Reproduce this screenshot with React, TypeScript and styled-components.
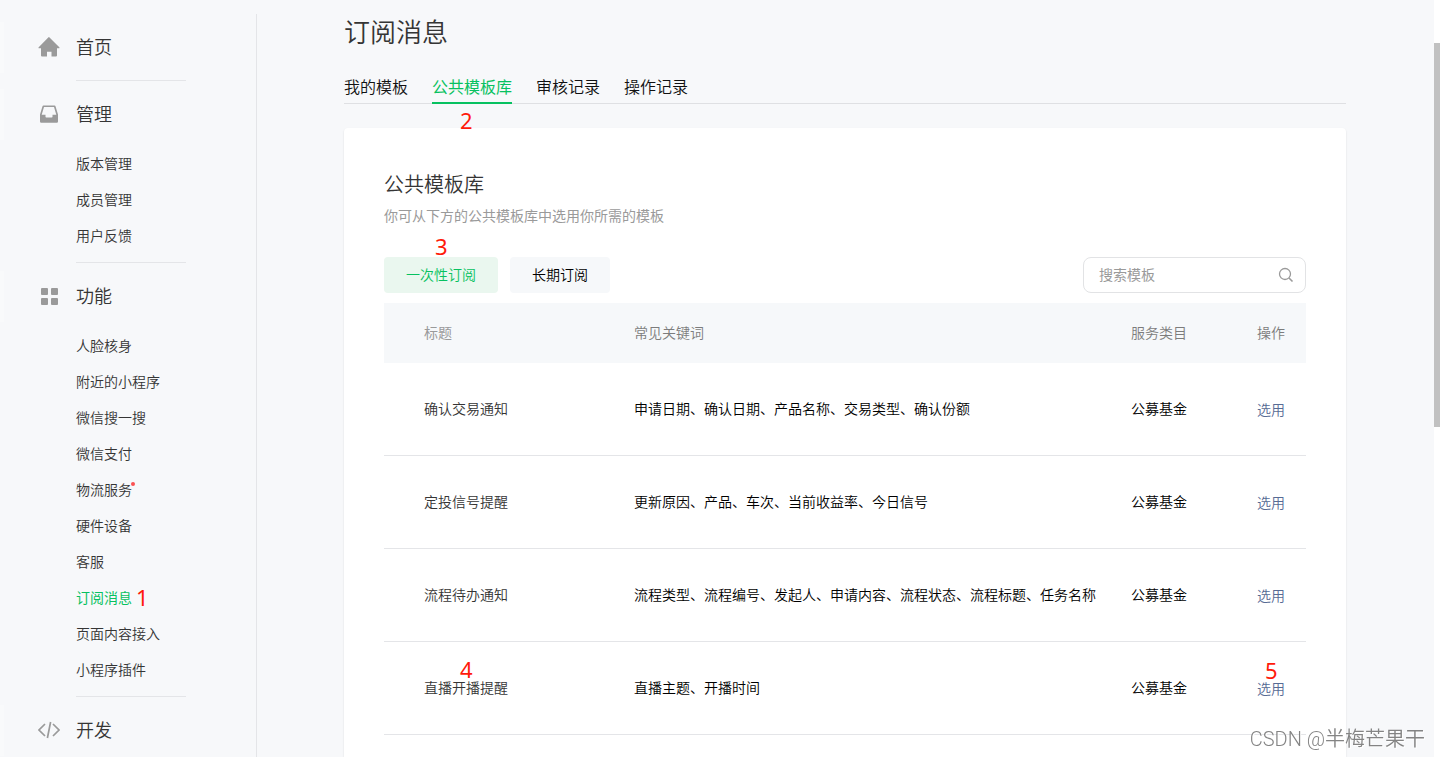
import React from 'react';
import styled, { createGlobalStyle } from 'styled-components';

const GlobalStyle = createGlobalStyle`
  *, *::before, *::after { box-sizing: border-box; }
  body {
    margin: 0;
    background: #f7f8fa;
    color: #353535;
    font-family: "Noto Sans CJK SC", "Noto Sans", sans-serif;
    font-size: 14px;
    font-weight: 350;
  }
  h1, h2, p, ul { margin: 0; padding: 0; font-weight: inherit; }
  ul { list-style: none; }
  a { text-decoration: none; color: inherit; }
  button, input { font: inherit; }
`;

const Shell = styled.div`
  display: flex;
  height: 100vh;
  overflow: hidden;
`;

const Sidebar = styled.nav`
  flex: none;
  width: 257px;
  margin-top: 14px;
  padding-top: 15px;
  border-right: 1px solid #e4e5e8;
`;

const Group = styled.section`
  & + &::before {
    content: '';
    display: block;
    width: 110px;
    height: 1px;
    margin: 0 0 15px 76px;
    background: #e4e5e8;
  }
`;

const GroupLink = styled.a<{ $alone?: boolean }>`
  position: relative;
  display: flex;
  align-items: center;
  gap: 16px;
  height: 37px;
  margin-bottom: ${(p) => (p.$alone ? 14 : 0)}px;
  padding: 0 0 3px 38px;
  font-size: 18px;

  &::before {
    content: '';
    position: absolute;
    left: 0;
    top: -7px;
    width: 4px;
    height: 51px;
    background: #f9fafb;
  }
`;

const GroupIcon = styled.svg`
  width: 22px;
  height: 22px;
  margin-top: 2px;
  color: #9a9a9a;
`;

const ItemList = styled.ul`
  padding: 14px 0 7px 76px;
`;

const ItemLink = styled.a<{ $active?: boolean }>`
  position: relative;
  display: inline-block;
  line-height: 32px;
  vertical-align: top;
  color: ${(p) => (p.$active ? '#07c160' : '#353535')};
  font-weight: ${(p) => (p.$active ? 400 : 350)};
`;

const Item = styled.li`
  height: 36px;
`;

const Dot = styled.i`
  position: absolute;
  top: 9px;
  right: -3px;
  width: 4px;
  height: 4px;
  border-radius: 50%;
  background: #fa5151;
`;

const Mark = styled.span<{ $left: number; $top: number }>`
  position: absolute;
  left: ${(p) => p.$left}px;
  top: ${(p) => p.$top}px;
  color: #ff1a0a;
  font-family: "Noto Sans", sans-serif;
  font-size: 22px;
  font-weight: 400;
  line-height: 24px;
  pointer-events: none;
`;

const Main = styled.main`
  flex: 1;
  min-width: 0;
  display: flex;
  flex-direction: column;
  padding: 14px 94px 0 87px;
`;

const Title = styled.h1`
  font-size: 26px;
  line-height: 34px;
`;

const Tabs = styled.div`
  display: flex;
  gap: 24px;
  margin-top: 24px;
  border-bottom: 1px solid #dfe0e3;
`;

const Tab = styled.a<{ $active?: boolean }>`
  position: relative;
  margin-bottom: -1px;
  padding-bottom: 2px;
  border-bottom: 2px solid ${(p) => (p.$active ? '#07c160' : 'transparent')};
  color: ${(p) => (p.$active ? '#07c160' : '#111')};
  font-size: 16px;
  font-weight: ${(p) => (p.$active ? 400 : 350)};
  line-height: 28px;
`;

const Card = styled.section`
  flex: 1 0 auto;
  margin-top: 24px;
  padding: 40px 40px 0;
  border-radius: 4px 4px 0 0;
  background: #fff;
  box-shadow: 0 1px 2px rgba(0, 0, 0, 0.12);
`;

const CardTitle = styled.h2`
  font-size: 20px;
  line-height: 32px;
`;

const CardNote = styled.p`
  color: #9a9a9a;
  font-weight: 400;
  line-height: 30px;
`;

const Toolbar = styled.div`
  display: flex;
  gap: 12px;
  margin: 27px 0 10px;
`;

const TypeButton = styled.button<{ $active?: boolean }>`
  position: relative;
  height: 36px;
  padding: 0 22px 2px;
  border: 0;
  border-radius: 4px;
  background: ${(p) => (p.$active ? '#eaf7ef' : '#f6f8fa')};
  color: ${(p) => (p.$active ? '#07c160' : '#000')};
`;

const Search = styled.label`
  display: flex;
  align-items: center;
  width: 223px;
  height: 36px;
  margin-left: auto;
  padding: 0 11px 0 15px;
  border: 1px solid #e2e3e5;
  border-radius: 8px;

  input {
    flex: 1;
    min-width: 0;
    padding: 0 0 2px;
    border: 0;
    outline: 0;
    background: none;
    font-weight: 400;
  }
  input::placeholder { color: #9a9a9a; opacity: 1; }
  svg { width: 16px; height: 16px; }
`;

const Table = styled.table`
  width: 100%;
  border-spacing: 0;
  table-layout: fixed;

  th, td {
    padding: 0 0 2px;
    text-align: left;
    font-weight: inherit;
    white-space: nowrap;
  }
  th:first-child, td:first-child { width: 250px; padding-left: 40px; }
  th:nth-child(3) { width: 126px; }
  th:nth-child(4) { width: 49px; }
  td:nth-child(4) { padding-bottom: 0; }
  th { height: 60px; background: #f6f8fa; color: #7c7c7c; }
  th:first-child { color: #9a9a9a; font-weight: 400; }
  td { height: 93px; border-bottom: 1px solid #e4e5e8; color: #000; }
  td:first-child { color: #353535; }
`;

const Anchor = styled.span`
  position: relative;
`;

const PickLink = styled.a`
  position: relative;
  color: #576b95;
`;

const ScrollTrack = styled.div`
  position: fixed;
  top: 0;
  right: 0;
  bottom: 0;
  width: 6px;
  padding-top: 43px;
  background: #fff;
`;

const ScrollThumb = styled.div`
  height: 384px;
  background: #c1c1c1;
`;

const Watermark = styled.div`
  position: fixed;
  right: 15px;
  bottom: 3px;
  color: rgba(110, 110, 110, 0.85);
  font-family: Roboto, "Noto Sans CJK SC", sans-serif;
  font-size: 20px;
  line-height: 30px;
  text-shadow: 1px 1px 0 #fff;
`;

const HomeIcon = () => (
  <GroupIcon viewBox="0 0 22 22" fill="currentColor" aria-hidden="true">
    <path d="M11 1 21.300 11.300a.5.5 0 0 1-.4.900H19v7.300a1 1 0 0 1-1 1h-4.500v-4.800h-4.500v4.800H4a1 1 0 0 1-1-1v-7.300H1.100a.5.5 0 0 1-.4-.9L10.500 1.200a.7.7 0 0 1 1 0Z" />
  </GroupIcon>
);

const InboxIcon = () => (
  <GroupIcon viewBox="0 0 22 22" fill="currentColor" aria-hidden="true">
    <path
      fillRule="evenodd"
      d="M5.500 2.500h11a1 1 0 0 1 1 .8L20 11.500v7a1.200 1.200 0 0 1-1.200 1.200H3.200A1.200 1.200 0 0 1 2 18.500v-7l2.500-8.200a1 1 0 0 1 1-.8ZM6 4 3.700 11.700h3.800v2a.8.8 0 0 0 .8.8h5.400a.8.8 0 0 0 .8-.8v-2h3.800L16 4Z"
    />
  </GroupIcon>
);

const GridIcon = () => (
  <GroupIcon viewBox="0 0 22 22" fill="currentColor" aria-hidden="true">
    <rect x="3" y="3" width="7" height="7" rx="1" />
    <rect x="13" y="3" width="7" height="7" rx="1" />
    <rect x="3" y="13" width="7" height="7" rx="1" />
    <rect x="13" y="13" width="7" height="7" rx="1" />
  </GroupIcon>
);

const CodeIcon = () => (
  <GroupIcon viewBox="0 0 22 22" fill="none" stroke="currentColor" strokeWidth="1.700" aria-hidden="true">
    <path d="M7 5 1 11l6 6M15 5l6 6-6 6M12.600 3 9.400 19" />
  </GroupIcon>
);

const SearchIcon = () => (
  <svg viewBox="0 0 16 16" fill="none" stroke="#9a9a9a" strokeWidth="1.300" aria-hidden="true">
    <circle cx="7" cy="7" r="5.500" />
    <path d="m11 11 3.500 3.500" strokeWidth="1.600" />
  </svg>
);

const groups = [
  { title: '首页', Icon: HomeIcon, items: [] },
  { title: '管理', Icon: InboxIcon, items: ['版本管理', '成员管理', '用户反馈'] },
  {
    title: '功能',
    Icon: GridIcon,
    items: [
      '人脸核身', '附近的小程序', '微信搜一搜', '微信支付', '物流服务',
      '硬件设备', '客服', '订阅消息', '页面内容接入', '小程序插件',
    ],
  },
  { title: '开发', Icon: CodeIcon, items: [] },
];

const templates = [
  { title: '确认交易通知', words: '申请日期、确认日期、产品名称、交易类型、确认份额' },
  { title: '定投信号提醒', words: '更新原因、产品、车次、当前收益率、今日信号' },
  { title: '流程待办通知', words: '流程类型、流程编号、发起人、申请内容、流程状态、流程标题、任务名称' },
  { title: '直播开播提醒', words: '直播主题、开播时间', marked: true },
];

export default function App() {
  return (
    <>
      <GlobalStyle />
      <Shell>
        <Sidebar>
          {groups.map(({ title, Icon, items }) => (
            <Group key={title}>
              <GroupLink href="#" $alone={items.length === 0}>
                <Icon />
                {title}
              </GroupLink>
              {items.length > 0 && (
                <ItemList>
                  {items.map((item) => (
                    <Item key={item}>
                      <ItemLink href="#" $active={item === '订阅消息'}>
                        {item}
                        {item === '物流服务' && <Dot />}
                        {item === '订阅消息' && <Mark $left={60} $top={4}>1</Mark>}
                      </ItemLink>
                    </Item>
                  ))}
                </ItemList>
              )}
            </Group>
          ))}
        </Sidebar>
        <Main>
          <Title>订阅消息</Title>
          <Tabs>
            <Tab href="#">我的模板</Tab>
            <Tab href="#" $active>
              公共模板库
              <Mark $left={28} $top={36}>2</Mark>
            </Tab>
            <Tab href="#">审核记录</Tab>
            <Tab href="#">操作记录</Tab>
          </Tabs>
          <Card>
            <CardTitle>公共模板库</CardTitle>
            <CardNote>你可从下方的公共模板库中选用你所需的模板</CardNote>
            <Toolbar>
              <TypeButton type="button" $active>
                一次性订阅
                <Mark $left={51} $top={-23}>3</Mark>
              </TypeButton>
              <TypeButton type="button">长期订阅</TypeButton>
              <Search>
                <input type="text" placeholder="搜索模板" aria-label="搜索模板" />
                <SearchIcon />
              </Search>
            </Toolbar>
            <Table>
              <thead>
                <tr>
                  <th>标题</th>
                  <th>常见关键词</th>
                  <th>服务类目</th>
                  <th>操作</th>
                </tr>
              </thead>
              <tbody>
                {templates.map((t) => (
                  <tr key={t.title}>
                    <td>
                      <Anchor>
                        {t.title}
                        {t.marked && <Mark $left={36} $top={-20}>4</Mark>}
                      </Anchor>
                    </td>
                    <td>{t.words}</td>
                    <td>公募基金</td>
                    <td>
                      <PickLink href="#">
                        选用
                        {t.marked && <Mark $left={8} $top={-20}>5</Mark>}
                      </PickLink>
                    </td>
                  </tr>
                ))}
              </tbody>
            </Table>
          </Card>
        </Main>
      </Shell>
      <ScrollTrack>
        <ScrollThumb />
      </ScrollTrack>
      <Watermark>CSDN @半梅芒果干</Watermark>
    </>
  );
}
